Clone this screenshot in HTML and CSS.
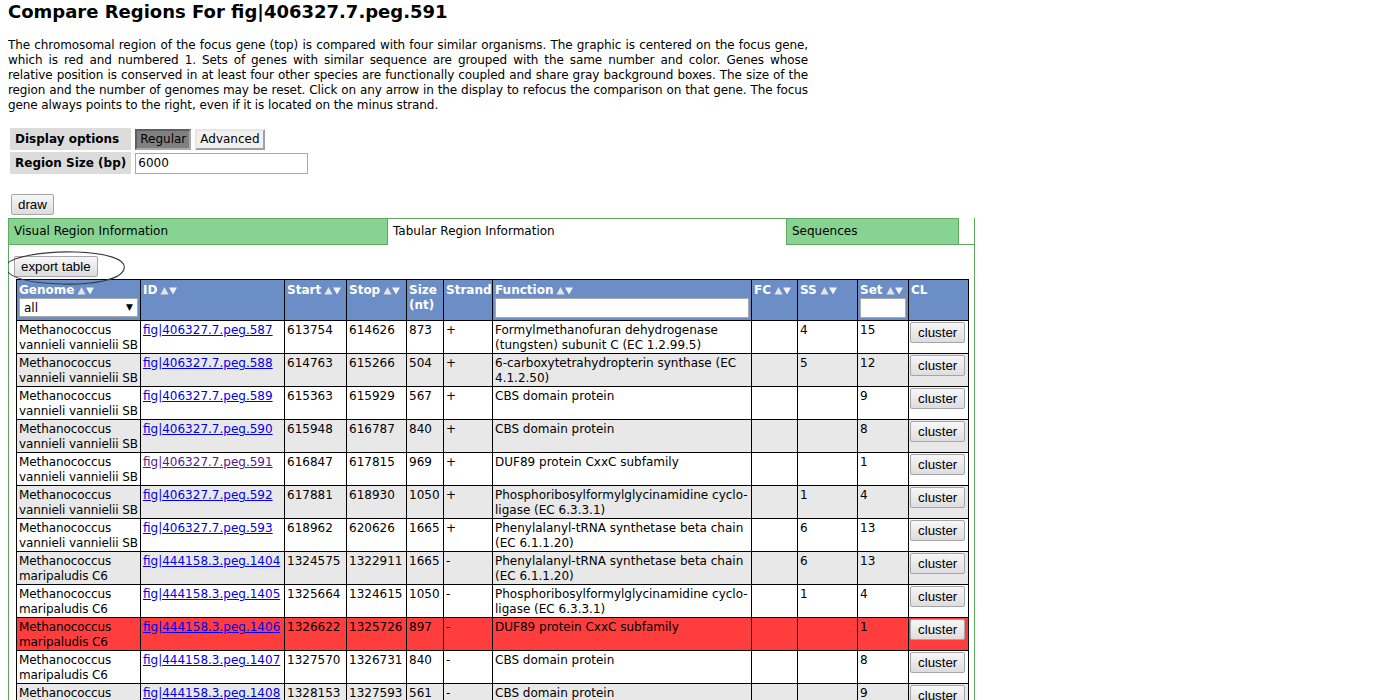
FILE: index.html
```html
<!DOCTYPE html>
<html>
<head>
<meta charset="utf-8">
<title>Compare Regions</title>
<link rel="stylesheet" href="styles.css">
</head>
<body>
<h1 class="title">Compare Regions For fig|406327.7.peg.591</h1>
<p class="intro"><span class="ln">The chromosomal region of the focus gene (top) is compared with four similar organisms. The graphic is centered on the focus gene,</span>
<span class="ln">which is red and numbered 1. Sets of genes with similar sequence are grouped with the same number and color. Genes whose</span>
<span class="ln">relative position is conserved in at least four other species are functionally coupled and share gray background boxes. The size of the</span>
<span class="ln">region and the number of genomes may be reset. Click on any arrow in the display to refocus the comparison on that gene. The focus</span>
<span class="ln ln-last">gene always points to the right, even if it is located on the minus strand.</span></p>

<table class="opts">
  <tr>
    <th>Display options</th>
    <td><div class="seg-group"><span class="seg seg-on">Regular</span><span class="seg">Advanced</span></div></td>
  </tr>
  <tr>
    <th>Region Size (bp)</th>
    <td><input class="region" type="text" value="6000"></td>
  </tr>
</table>

<div class="draw-row"><button class="btn">draw</button></div>

<div class="tabs">
  <div class="tab tab-visual">Visual Region Information</div>
  <div class="tab tab-active">Tabular Region Information</div>
  <div class="tab tab-seq">Sequences</div>
  <div class="tab-fill"></div>
</div>

<div class="panel">
  <div class="export">
    <button class="btn">export table</button>
    <svg class="ring" width="124" height="40" viewBox="0 0 124 40"><path d="M2 20 C0 9 40 3 72 4 C102 5 123 11 120 21 C117 32 88 37 58 36 C26 35 4 30 2 20 Z" fill="none" stroke="#3a3a3a" stroke-width="1.1"/></svg>
  </div>

  <table class="data">
    <colgroup>
      <col class="c-genome"><col class="c-id"><col class="c-start"><col class="c-stop"><col class="c-size"><col class="c-strand"><col class="c-func"><col class="c-fc"><col class="c-ss"><col class="c-set"><col class="c-cl">
    </colgroup>
    <thead>
      <tr>
        <th>Genome<svg class="sort" width="17" height="9" viewBox="0 0 17 9"><path d="M0.5 8.5 L4.5 1 L8.5 8.5Z" fill="#e4e4e4"/><path d="M9 1.5 H17 L13 8.5Z" fill="#f2f2f2"/></svg>
          <div class="sel"><select><option>all</option></select><span class="sel-arrow">▼</span></div></th>
        <th>ID<svg class="sort" width="17" height="9" viewBox="0 0 17 9"><path d="M0.5 8.5 L4.5 1 L8.5 8.5Z" fill="#e4e4e4"/><path d="M9 1.5 H17 L13 8.5Z" fill="#f2f2f2"/></svg></th>
        <th>Start<svg class="sort" width="17" height="9" viewBox="0 0 17 9"><path d="M0.5 8.5 L4.5 1 L8.5 8.5Z" fill="#e4e4e4"/><path d="M9 1.5 H17 L13 8.5Z" fill="#f2f2f2"/></svg></th>
        <th>Stop<svg class="sort" width="17" height="9" viewBox="0 0 17 9"><path d="M0.5 8.5 L4.5 1 L8.5 8.5Z" fill="#e4e4e4"/><path d="M9 1.5 H17 L13 8.5Z" fill="#f2f2f2"/></svg></th>
        <th>Size<br>(nt)</th>
        <th>Strand</th>
        <th>Function<svg class="sort" width="17" height="9" viewBox="0 0 17 9"><path d="M0.5 8.5 L4.5 1 L8.5 8.5Z" fill="#e4e4e4"/><path d="M9 1.5 H17 L13 8.5Z" fill="#f2f2f2"/></svg>
          <input class="filter" type="text"></th>
        <th>FC<svg class="sort" width="17" height="9" viewBox="0 0 17 9"><path d="M0.5 8.5 L4.5 1 L8.5 8.5Z" fill="#e4e4e4"/><path d="M9 1.5 H17 L13 8.5Z" fill="#f2f2f2"/></svg></th>
        <th>SS<svg class="sort" width="17" height="9" viewBox="0 0 17 9"><path d="M0.5 8.5 L4.5 1 L8.5 8.5Z" fill="#e4e4e4"/><path d="M9 1.5 H17 L13 8.5Z" fill="#f2f2f2"/></svg></th>
        <th>Set<svg class="sort" width="17" height="9" viewBox="0 0 17 9"><path d="M0.5 8.5 L4.5 1 L8.5 8.5Z" fill="#e4e4e4"/><path d="M9 1.5 H17 L13 8.5Z" fill="#f2f2f2"/></svg>
          <input class="filter" type="text"></th>
        <th>CL</th>
      </tr>
    </thead>
    <tbody>
      <tr>
        <td class="genome">Methanococcus<br>vannieli vannielii SB</td>
        <td class="id"><a href="#">fig|406327.7.peg.587</a></td>
        <td>613754</td><td>614626</td><td>873</td><td>+</td>
        <td>Formylmethanofuran dehydrogenase (tungsten) subunit C (EC 1.2.99.5)</td>
        <td></td><td>4</td><td>15</td>
        <td class="cl"><button class="btn">cluster</button></td>
      </tr>
      <tr>
        <td class="genome">Methanococcus<br>vannieli vannielii SB</td>
        <td class="id"><a href="#">fig|406327.7.peg.588</a></td>
        <td>614763</td><td>615266</td><td>504</td><td>+</td>
        <td>6-carboxytetrahydropterin synthase (EC 4.1.2.50)</td>
        <td></td><td>5</td><td>12</td>
        <td class="cl"><button class="btn">cluster</button></td>
      </tr>
      <tr>
        <td class="genome">Methanococcus<br>vannieli vannielii SB</td>
        <td class="id"><a href="#">fig|406327.7.peg.589</a></td>
        <td>615363</td><td>615929</td><td>567</td><td>+</td>
        <td>CBS domain protein</td>
        <td></td><td></td><td>9</td>
        <td class="cl"><button class="btn">cluster</button></td>
      </tr>
      <tr>
        <td class="genome">Methanococcus<br>vannieli vannielii SB</td>
        <td class="id"><a href="#">fig|406327.7.peg.590</a></td>
        <td>615948</td><td>616787</td><td>840</td><td>+</td>
        <td>CBS domain protein</td>
        <td></td><td></td><td>8</td>
        <td class="cl"><button class="btn">cluster</button></td>
      </tr>
      <tr>
        <td class="genome">Methanococcus<br>vannieli vannielii SB</td>
        <td class="id"><a href="#" class="visited">fig|406327.7.peg.591</a></td>
        <td>616847</td><td>617815</td><td>969</td><td>+</td>
        <td>DUF89 protein CxxC subfamily</td>
        <td></td><td></td><td>1</td>
        <td class="cl"><button class="btn">cluster</button></td>
      </tr>
      <tr>
        <td class="genome">Methanococcus<br>vannieli vannielii SB</td>
        <td class="id"><a href="#">fig|406327.7.peg.592</a></td>
        <td>617881</td><td>618930</td><td>1050</td><td>+</td>
        <td>Phosphoribosylformylglycinamidine cyclo-ligase (EC 6.3.3.1)</td>
        <td></td><td>1</td><td>4</td>
        <td class="cl"><button class="btn">cluster</button></td>
      </tr>
      <tr>
        <td class="genome">Methanococcus<br>vannieli vannielii SB</td>
        <td class="id"><a href="#">fig|406327.7.peg.593</a></td>
        <td>618962</td><td>620626</td><td>1665</td><td>+</td>
        <td>Phenylalanyl-tRNA synthetase beta chain (EC 6.1.1.20)</td>
        <td></td><td>6</td><td>13</td>
        <td class="cl"><button class="btn">cluster</button></td>
      </tr>
      <tr>
        <td class="genome">Methanococcus<br>maripaludis C6</td>
        <td class="id"><a href="#">fig|444158.3.peg.1404</a></td>
        <td>1324575</td><td>1322911</td><td>1665</td><td>-</td>
        <td>Phenylalanyl-tRNA synthetase beta chain (EC 6.1.1.20)</td>
        <td></td><td>6</td><td>13</td>
        <td class="cl"><button class="btn">cluster</button></td>
      </tr>
      <tr>
        <td class="genome">Methanococcus<br>maripaludis C6</td>
        <td class="id"><a href="#">fig|444158.3.peg.1405</a></td>
        <td>1325664</td><td>1324615</td><td>1050</td><td>-</td>
        <td>Phosphoribosylformylglycinamidine cyclo-ligase (EC 6.3.3.1)</td>
        <td></td><td>1</td><td>4</td>
        <td class="cl"><button class="btn">cluster</button></td>
      </tr>
      <tr class="focus">
        <td class="genome">Methanococcus<br>maripaludis C6</td>
        <td class="id"><a href="#">fig|444158.3.peg.1406</a></td>
        <td>1326622</td><td>1325726</td><td>897</td><td>-</td>
        <td>DUF89 protein CxxC subfamily</td>
        <td></td><td></td><td>1</td>
        <td class="cl"><button class="btn">cluster</button></td>
      </tr>
      <tr>
        <td class="genome">Methanococcus<br>maripaludis C6</td>
        <td class="id"><a href="#">fig|444158.3.peg.1407</a></td>
        <td>1327570</td><td>1326731</td><td>840</td><td>-</td>
        <td>CBS domain protein</td>
        <td></td><td></td><td>8</td>
        <td class="cl"><button class="btn">cluster</button></td>
      </tr>
      <tr>
        <td class="genome">Methanococcus<br>maripaludis C6</td>
        <td class="id"><a href="#">fig|444158.3.peg.1408</a></td>
        <td>1328153</td><td>1327593</td><td>561</td><td>-</td>
        <td>CBS domain protein</td>
        <td></td><td></td><td>9</td>
        <td class="cl"><button class="btn">cluster</button></td>
      </tr>
    </tbody>
  </table>
</div>
</body>
</html>
```

FILE: styles.css
```css
* { box-sizing: border-box; }

body {
  margin: 0 8px 8px;
  font-family: "DejaVu Sans", Verdana, sans-serif;
  font-size: 12px;
  line-height: 15px;
  color: #000;
  background: #fff;
}

.title {
  margin: 0;
  padding-top: 1px;
  font-size: 18px;
  line-height: 22px;
  font-weight: bold;
}

.intro {
  margin: 15px 0 0;
  width: 800px;
  letter-spacing: -0.1px;
}
.intro .ln {
  display: block;
  text-align: justify;
  text-align-last: justify;
  white-space: nowrap;
}
.intro .ln-last { text-align-last: left; }

/* options */
.opts {
  margin-top: 13px;
  border-spacing: 2px;
  border-collapse: separate;
}
.opts th {
  background: #dcdcdc;
  text-align: left;
  font-weight: bold;
  white-space: nowrap;
  padding: 3px 5px 3px 5px;
  height: 22px;
}
.opts td { padding: 0 0 0 2px; }

.seg-group { display: flex; gap: 4px; align-items: center; }
.seg {
  display: inline-block;
  height: 21px;
  line-height: 17px;
  padding: 0 3px;
  border: 2px solid;
  border-color: #e6e6e6 #a0a0a0 #a0a0a0 #e6e6e6;
  background: #f0f0f0;
}
.seg-on {
  background: #808080;
  border-color: #5e5e5e #a8a8a8 #a8a8a8 #5e5e5e;
}

.region {
  display: block;
  width: 173px;
  height: 21px;
  border: 1px solid #a9a9a9;
  padding: 1px 2px;
  font: 12px "DejaVu Sans", Verdana, sans-serif;
}

.draw-row { margin-top: 18px; padding-left: 3px; }

.btn {
  font-family: "Liberation Sans", Arial, sans-serif;
  font-size: 13.33px;
  height: 21px;
  line-height: 17px;
  padding: 0 6px;
  color: #000;
  border: 1px solid #a6a6a6;
  border-radius: 2px;
  background: linear-gradient(#f7f7f7, #dddddd);
  cursor: pointer;
}

/* tabs */
.tabs {
  display: flex;
  margin-top: 3px;
  height: 27px;
}
.tab {
  height: 27px;
  line-height: 25px;
  padding-left: 5px;
  white-space: nowrap;
}
.tab-visual {
  width: 380px;
  background: #87d392;
  border: 1px solid #5daa5f;
}
.tab-active {
  width: 398px;
  background: #fff;
  border-top: 1px solid #5daa5f;
}
.tab-seq {
  width: 173px;
  background: #87d392;
  border: 1px solid #5daa5f;
}
.tab-fill {
  width: 16px;
  border-bottom: 1px solid #5daa5f;
  border-right: 1px solid #5daa5f;
  height: 27px;
}

.panel {
  width: 967px;
  border-left: 1px solid #5daa5f;
  border-right: 1px solid #5daa5f;
  padding: 11px 5px 0 5px;
}

.export { position: relative; height: 23px; }
.export .btn { position: relative; z-index: 1; }
.ring {
  position: absolute;
  left: -10px;
  top: -8px;
  z-index: 2;
  pointer-events: none;
}

/* data table */
.data {
  margin-left: 2px;
  width: 953px;
  table-layout: fixed;
  border-collapse: collapse;
  border: 1px solid #000;
}
.c-genome { width: 124px; }
.c-id { width: 144px; }
.c-start { width: 62px; }
.c-stop { width: 60px; }
.c-size { width: 37px; }
.c-strand { width: 49px; }
.c-func { width: 259px; }
.c-fc { width: 46px; }
.c-ss { width: 60px; }
.c-set { width: 51px; }
.c-cl { width: 60px; }

.data th, .data td {
  border: 1px solid #000;
  vertical-align: top;
  text-align: left;
  padding: 2px 2px 0;
}
.data th {
  background: #6b8ec6;
  color: #fff;
  font-weight: bold;
  white-space: nowrap;
  height: 41px;
  padding: 3px 2px 1px;
}
.data td { height: 33px; }
.data tbody tr:nth-child(even) td { background: #e8e8e8; }
.data tbody tr.focus td { background: #ff3d3d; }

.sort { margin-left: 3px; vertical-align: -1px; }

.sel { position: relative; margin-top: 0; }
.sel select {
  display: block;
  width: 100%;
  height: 19px;
  appearance: none;
  -webkit-appearance: none;
  border: 1px solid #a9a9a9;
  background: #fff;
  padding: 0 4px;
  font: 12px "DejaVu Sans", Verdana, sans-serif;
  color: #000;
  border-radius: 0;
}
.sel-arrow {
  position: absolute;
  right: 5px;
  top: 3px;
  font-size: 9px;
  line-height: 12px;
  color: #000;
  pointer-events: none;
}

.filter {
  display: block;
  width: 100%;
  height: 20px;
  margin-top: 0;
  border: 1px solid #a9a9a9;
  background: #fff;
  padding: 1px 2px;
}

.genome, .id { white-space: nowrap; }
.genome { letter-spacing: -0.1px; }
.id a { color: #0000ee; text-decoration: underline; }
.id a.visited { color: #551a8b; }

.data td.cl { padding: 1px 1px 0; }
.cl .btn { padding: 0 7px; }
```
